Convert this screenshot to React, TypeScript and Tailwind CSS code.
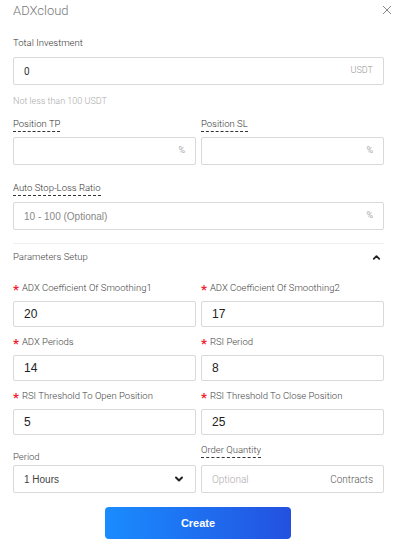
import { FiChevronDown, FiChevronUp } from 'react-icons/fi';

const label = "text-[9.5px] leading-[14px] text-[#333] font-light";
const dashed = "border-b border-dashed border-[#333] w-fit";
const box = "h-[28px] border border-[#d9d9d9] rounded-[2px] flex items-center px-[10px] bg-white";

function Req({ text }: { text: string }) {
    return (
        <div className={label + " flex items-center h-[14px]"}>
            <span className="text-[#f5222d] text-[13px] font-bold mr-[3px] leading-none mt-[3px]">*</span>
            <span className="text-[#444]">{text}</span>
        </div>
    )
}

function Val({ v }: { v: string }) {
    return (
        <div className="h-[26px] border border-[#d9d9d9] rounded-[2px] flex items-center px-[10px] mt-[6px] text-[12px] text-[#222] font-['Liberation_Sans',sans-serif]">
            {v}
        </div>
    )
}

export default function App(): JSX.Element {
    return (
        <div className="w-[399px] h-[545px] bg-white font-['Roboto',sans-serif] pl-[13px] pr-[15px] relative">
            <div className="flex justify-between items-center pt-[2px] h-[20px]">
                <h1 className="text-[13px] font-light text-[#777] leading-[18px]">ADXcloud</h1>
                <svg width="10" height="10" viewBox="0 0 10 10" className="mr-[-8px] mt-[-2px]">
                    <path d="M1 1 L9 9 M9 1 L1 9" stroke="#888" strokeWidth="1" />
                </svg>
            </div>

            <div className={label + " mt-[16px]"}>Total Investment</div>
            <div className={box + " mt-[7px] justify-between"}>
                <span className="text-[10px] text-[#333]">0</span>
                <span className="text-[9px] text-[#999] font-light">USDT</span>
            </div>
            <div className="text-[9px] text-[#aaa] font-light mt-[9px] leading-[14px]">Not less than 100 USDT</div>

            <div className="grid grid-cols-2 gap-x-[5px] mt-[9px]">
                <div>
                    <div className={label + " " + dashed}>Position TP</div>
                    <div className={box + " mt-[5px] justify-end"}>
                        <span className="text-[9px] text-[#aaa]">%</span>
                    </div>
                </div>
                <div>
                    <div className={label + " " + dashed}>Position SL</div>
                    <div className={box + " mt-[5px] justify-end"}>
                        <span className="text-[9px] text-[#aaa]">%</span>
                    </div>
                </div>
            </div>

            <div className={label + " " + dashed + " mt-[16px]"}>Auto Stop-Loss Ratio</div>
            <div className={box + " mt-[6px] justify-between"}>
                <span className="text-[10px] text-[#888] font-['Liberation_Sans',sans-serif]">10 - 100 (Optional)</span>
                <span className="text-[9px] text-[#aaa]">%</span>
            </div>

            <div className="h-px bg-[#f0f0f0] mt-[13px]"></div>

            <div className="flex justify-between items-center mt-[6px]">
                <span className="text-[9.5px] font-light text-[#444] leading-[14px]">Parameters Setup</span>
                <FiChevronUp size={11} strokeWidth={4} className="text-[#222] mr-[2px]" />
            </div>

            <div className="grid grid-cols-2 gap-x-[5px] mt-[17px]">
                <div>
                    <Req text="ADX Coefficient Of Smoothing1" />
                    <Val v="20" />
                </div>
                <div>
                    <Req text="ADX Coefficient Of Smoothing2" />
                    <Val v="17" />
                </div>
                <div className="mt-[8px]">
                    <Req text="ADX Periods" />
                    <Val v="14" />
                </div>
                <div className="mt-[8px]">
                    <Req text="RSI Period" />
                    <Val v="8" />
                </div>
                <div className="mt-[8px]">
                    <Req text="RSI Threshold To Open Position" />
                    <Val v="5" />
                </div>
                <div className="mt-[8px]">
                    <Req text="RSI Threshold To Close Position" />
                    <Val v="25" />
                </div>
                <div className="mt-[15px]">
                    <div className={label + " text-[#444]"}>Period</div>
                    <div className={box + " mt-[1px] justify-between"}>
                        <span className="text-[10px] text-[#444] font-['Liberation_Sans',sans-serif]">1 Hours</span>
                        <FiChevronDown size={12} strokeWidth={4} className="text-[#222]" />
                    </div>
                </div>
                <div className="mt-[8px]">
                    <div className={label + " " + dashed + " text-[#444]"}>Order Quantity</div>
                    <div className={box + " mt-[7px] justify-between"}>
                        <span className="text-[10px] text-[#aaa] font-light">Optional</span>
                        <span className="text-[10px] text-[#555] font-light">Contracts</span>
                    </div>
                </div>
            </div>

            <div className="flex justify-center mt-[14px] pr-[1px]">
                <button className="w-[186px] h-[32px] rounded-[4px] bg-gradient-to-r from-[#1a8cff] to-[#2350e0] text-white text-[11px] font-bold font-['Liberation_Sans',sans-serif]">
                    Create
                </button>
            </div>
        </div>
    )
}
